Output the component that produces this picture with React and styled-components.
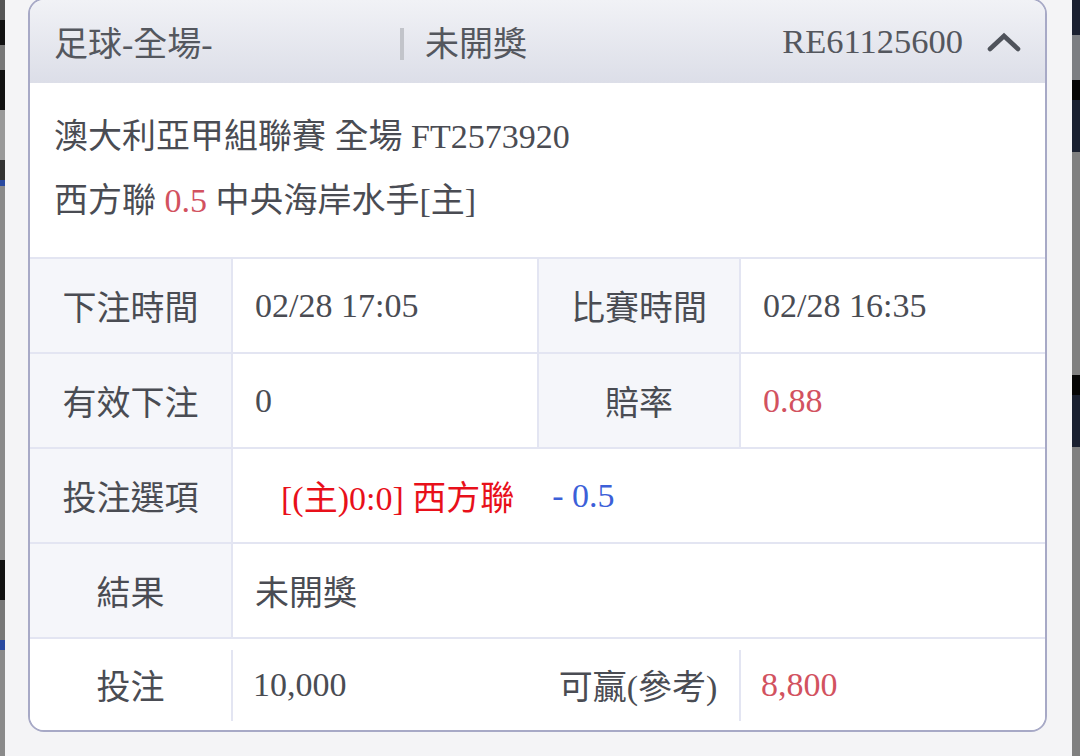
import React from "react";
import styled, { createGlobalStyle } from "styled-components";

const Global = createGlobalStyle`
  html, body { margin: 0; padding: 0; }
  body {
    width: 1080px;
    height: 756px;
    overflow: hidden;
    font-family: "Liberation Serif", "Noto Sans CJK TC", serif;
    color: #4a4c53;
  }
`;

const Page = styled.div`
  display: flex;
  width: 1080px;
  height: 756px;
  overflow: hidden;
`;

const Main = styled.div`
  flex: 1;
  background: #f4f4f6;
  padding: 0 25px 0 23px;
`;

const Card = styled.div`
  margin-top: -2px;
  border: 2px solid #a7a9c6;
  border-radius: 16px;
  overflow: hidden;
  background: #fff;
`;

const Header = styled.div`
  height: 83px;
  display: flex;
  align-items: center;
  padding: 0 23px 0 24px;
  background: linear-gradient(#f1f2f6, #dcdee8);
  font-size: 34px;
  color: #54575e;
`;

const Title = styled.div`
  flex: 0 0 346px;
`;

const Sep = styled.div`
  width: 4px;
  height: 32px;
  margin-top: 4px;
  background: #c2c4ca;
  margin-right: 21px;
`;

const Status = styled.div`
  flex: 1;
`;

const Ticket = styled.div`
  font-size: 34.5px;
  margin-right: 24px;
`;

const Chevron = styled.svg`
  width: 34px;
  height: 20px;
  display: block;
  margin-right: 1px;
`;

const Info = styled.div`
  padding: 22px 24px 24px;
  font-size: 34px;
  line-height: 64px;
`;

const Line = styled.div`
  white-space: nowrap;
`;

const Odd = styled.span`
  color: ${(p) => p.$color || "#d2525f"};
`;

const Row = styled.div`
  display: grid;
  grid-template-columns: 201px 306px 202px 306px;
  height: ${(p) => (p.$last ? 93 : 95)}px;
  border-top: 2px solid #e3e5f2;
  box-sizing: border-box;
`;

const Cell = styled.div`
  position: relative;
  display: flex;
  align-items: center;
  justify-content: ${(p) => (p.$label ? "center" : "flex-start")};
  padding-left: ${(p) => (p.$label ? 0 : 22)}px;
  grid-column: ${(p) => (p.$span ? `span ${p.$span}` : "auto")};
  background: ${(p) => (p.$label && !p.$plain ? "#f5f6fa" : "#fff")};
  border-left: ${(p) => (p.$first || p.$plain ? "none" : "2px solid #e3e5f2")};
  font-size: 34px;
  color: #4a4c53;
  white-space: nowrap;

  ${(p) =>
    p.$divider &&
    `
    border-left: none;
    &::before {
      content: "";
      position: absolute;
      left: 0;
      top: 11px;
      bottom: 9px;
      width: 2px;
      background: #e3e5f2;
    }
  `}
`;

const Pick = styled.span`
  margin-left: 26px;
  color: #e8101a;
`;

const Hdp = styled.span`
  margin-left: 38px;
  color: #3c5fd8;
`;

const RightBands = styled.div`
  flex: 0 0 8px;
  background: linear-gradient(
    #1b2030 0 35px,
    #7c7e82 35px 80px,
    #050505 80px 100px,
    #1a2030 100px 152px,
    #808080 152px 375px,
    #050505 375px 395px,
    #1a2030 395px 447px,
    #808080 447px 756px
  );
`;

const LeftBands = styled.div`
  flex: 0 0 5px;
  background: linear-gradient(
    #555 0 20px,
    #111 20px 45px,
    #777 45px 70px,
    #111 70px 110px,
    #999 110px 160px,
    #333 160px 180px,
    #2a4aa0 180px 186px,
    #8a8a8a 186px 560px,
    #111 560px 600px,
    #777 600px 640px,
    #2a4aa0 640px 650px,
    #8a8a8a 650px 756px
  );
`;

export default function App() {
  return (
    <>
      <Global />
      <Page>
        <LeftBands />
        <Main>
          <Card>
            <Header>
              <Title>足球-全場-</Title>
              <Sep />
              <Status>未開獎</Status>
              <Ticket>RE61125600</Ticket>
              <Chevron viewBox="0 0 34 20">
                <polyline
                  points="3,17 17,4 31,17"
                  fill="none"
                  stroke="#4f535b"
                  strokeWidth="4.6"
                  strokeLinecap="round"
                  strokeLinejoin="miter"
                />
              </Chevron>
            </Header>
            <Info>
              <Line>澳大利亞甲組聯賽 全場 FT2573920</Line>
              <Line>
                西方聯 <Odd>0.5</Odd> 中央海岸水手[主]
              </Line>
            </Info>
            <Row>
              <Cell $label $first>下注時間</Cell>
              <Cell>02/28 17:05</Cell>
              <Cell $label>比賽時間</Cell>
              <Cell>02/28 16:35</Cell>
            </Row>
            <Row>
              <Cell $label $first>有效下注</Cell>
              <Cell>0</Cell>
              <Cell $label>賠率</Cell>
              <Cell>
                <Odd>0.88</Odd>
              </Cell>
            </Row>
            <Row>
              <Cell $label $first>投注選項</Cell>
              <Cell $span={3}>
                <Pick>[(主)0:0] 西方聯</Pick>
                <Hdp>- 0.5</Hdp>
              </Cell>
            </Row>
            <Row>
              <Cell $label $first>結果</Cell>
              <Cell $span={3}>未開獎</Cell>
            </Row>
            <Row $last>
              <Cell $label $first $plain>投注</Cell>
              <Cell $divider>10,000</Cell>
              <Cell $label $plain>可贏(參考)</Cell>
              <Cell $divider>
                <Odd>8,800</Odd>
              </Cell>
            </Row>
          </Card>
        </Main>
        <RightBands />
      </Page>
    </>
  );
}
